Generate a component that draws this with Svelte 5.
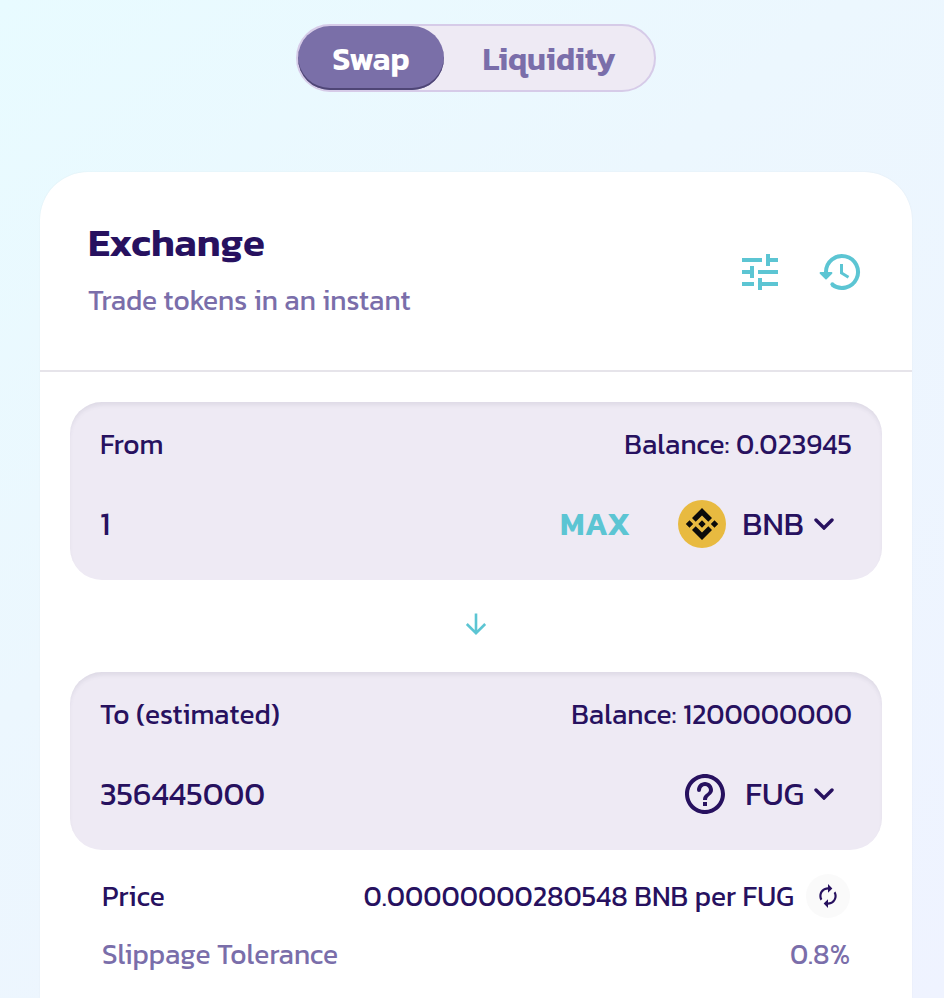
<script>
  let fromAmount = $state('1');
  let toAmount = $state('356445000');
  let view = $state('swap');
</script>

{#snippet chevron()}
  <svg class="chevron" viewBox="0 0 20 12" aria-hidden="true">
    <path d="M2 2l8 8 8-8" fill="none" stroke="currentColor" stroke-width="3.4" stroke-linecap="round" />
  </svg>
{/snippet}

<div class="page">
  <nav class="toggle" aria-label="Exchange views">
    <button class="swap" class:active={view === 'swap'} onclick={() => (view = 'swap')}>Swap</button>
    <button class="liquidity" class:active={view === 'liquidity'} onclick={() => (view = 'liquidity')}>Liquidity</button>
  </nav>

  <main class="card">
    <header>
      <div class="titles">
        <h1>Exchange</h1>
        <p>Trade tokens in an instant</p>
      </div>
      <div class="actions">
        <button class="icon" aria-label="Settings">
          <svg viewBox="0 0 24 24" width="48" height="48" fill="currentColor">
            <path d="M3 17v2h6v-2H3zM3 5v2h10V5H3zm10 16v-2h8v-2h-8v-2h-2v6h2zM7 9v2H3v2h4v2h2V9H7zm14 4v-2H11v2h10zm-6-4h2V7h4V5h-4V3h-2v6z" />
          </svg>
        </button>
        <button class="icon" aria-label="Recent transactions">
          <svg viewBox="0 0 48 48" width="48" height="48" fill="none" stroke="currentColor">
            <path d="M10 26v-2a16 16 0 1 1 6.2 12.6" stroke-width="4" />
            <circle cx="16.4" cy="36.3" r="2" fill="currentColor" stroke="none" />
            <path d="M4.5 25h11L10 30.5z" fill="currentColor" stroke-width="1.8" stroke-linejoin="round" />
            <path d="M25.5 16v9l7 4.2" stroke-width="3" />
          </svg>
        </button>
      </div>
    </header>

    <div class="body">
      <section class="panel">
        <div class="row">
          <label for="from-amount">From</label>
          <span>Balance: 0.023945</span>
        </div>
        <div class="entry">
          <input id="from-amount" inputmode="decimal" bind:value={fromAmount} />
          <button class="max">MAX</button>
          <button class="token">
            <svg viewBox="0 0 48 48" width="48" height="48" aria-hidden="true">
              <circle cx="24" cy="24" r="24" fill="#e8ba40" />
              <path fill="#0b0b0b" d="M24 8l10 10-3.7 3.7-6.3-6.3-6.3 6.3L14 18zM24 40l10-10-3.7-3.7-6.3 6.3-6.3-6.3L14 30zM24 20.3l3.7 3.7-3.7 3.7-3.7-3.7zM11.5 20.3l3.7 3.7-3.7 3.7L7.8 24zM36.5 20.3l3.7 3.7-3.7 3.7-3.7-3.7z" />
            </svg>
            <span>BNB</span>
            {@render chevron()}
          </button>
        </div>
      </section>

      <div class="switch">
        <button class="icon" aria-label="Switch tokens">
          <svg viewBox="0 0 24 24" width="24" height="24" fill="none" stroke="currentColor" stroke-width="2.6">
            <path d="M12 1.5v20M2.8 12l9.2 9.2 9.2-9.2" />
          </svg>
        </button>
      </div>

      <section class="panel">
        <div class="row">
          <label for="to-amount">To (estimated)</label>
          <span>Balance: 1200000000</span>
        </div>
        <div class="entry">
          <input id="to-amount" inputmode="decimal" bind:value={toAmount} />
          <button class="token">
            <svg viewBox="0 0 24 24" width="48" height="48" fill="currentColor" aria-hidden="true">
              <path d="M11 18h2v-2h-2v2zm1-16C6.48 2 2 6.48 2 12s4.48 10 10 10 10-4.48 10-10S17.52 2 12 2zm0 18c-4.41 0-8-3.59-8-8s3.59-8 8-8 8 3.59 8 8-3.59 8-8 8zm0-14c-2.21 0-4 1.79-4 4a1 1 0 0 0 2 0c0-1.1.9-2 2-2s2 .9 2 2c0 2-3 1.75-3 5h2c0-2.25 3-2.5 3-5 0-2.21-1.79-4-4-4z" />
            </svg>
            <span>FUG</span>
            {@render chevron()}
          </button>
        </div>
      </section>

      <div class="details">
        <div class="row">
          <span>Price</span>
          <span class="rate">
            0.00000000280548 BNB per FUG
            <button class="refresh" aria-label="Invert price">
              <svg viewBox="0 0 24 24" width="26" height="26" fill="currentColor">
                <path d="M12 6v3l4-4-4-4v3c-4.42 0-8 3.58-8 8 0 1.57.46 3.03 1.24 4.26L6.7 14.8c-.45-.83-.7-1.79-.7-2.8 0-3.31 2.69-6 6-6zm6.76 1.74L17.3 9.2c.44.84.7 1.79.7 2.8 0 3.31-2.69 6-6 6v-3l-4 4 4 4v-3c4.42 0 8-3.58 8-8 0-1.57-.46-3.03-1.24-4.26z" />
              </svg>
            </button>
          </span>
        </div>
        <div class="row slippage">
          <span>Slippage Tolerance</span>
          <span>0.8%</span>
        </div>
      </div>
    </div>
  </main>
</div>

<style>
  :global(body) {
    margin: 0;
  }

  .page {
    display: flex;
    flex-direction: column;
    align-items: center;
    box-sizing: border-box;
    min-height: 100vh;
    padding: 24px 32px 0 40px;
    background: linear-gradient(140deg, #e8fbff 0%, #ecf7fe 40%, #eff3ff 100%);
    color: #27115f;
    font-family: Kanit, 'Noto Sans', sans-serif;
    font-size: 28px;
    line-height: 40px;
  }

  button,
  input {
    margin: 0;
    padding: 0;
    border: 0;
    background: none;
    color: inherit;
    font: inherit;
  }

  button {
    cursor: pointer;
  }

  svg {
    display: block;
    flex: none;
  }

  .toggle {
    display: flex;
    border: 2px solid #d6cbe8;
    border-radius: 34px;
    background: #eeeaf4;
  }

  .toggle button {
    height: 64px;
    padding-top: 2px;
    border-radius: 32px;
    color: #7a6eaa;
    font-size: 32px;
    font-weight: 600;
  }

  .toggle .swap {
    min-width: 146px;
  }

  .toggle .liquidity {
    min-width: 210px;
  }

  .toggle .active {
    background: #7a6fa8;
    color: #fff;
    box-shadow: inset 0 -2px 0 #4f4676;
  }

  .card {
    flex: 1;
    align-self: stretch;
    margin-top: 80px;
    border-radius: 48px 48px 0 0;
    background: #fff;
    box-shadow: 0 0 2px rgba(25, 19, 38, 0.06);
  }

  header {
    display: flex;
    align-items: center;
    justify-content: space-between;
    padding: 48px 48px 46px;
    border-bottom: 2px solid #e6e4ea;
  }

  h1 {
    margin: 0 0 16px;
    font-size: 40px;
    font-weight: 600;
    line-height: 44px;
  }

  p {
    margin: 0;
    padding-bottom: 4px;
    color: #7a6eaa;
  }

  .actions {
    display: flex;
    gap: 32px;
  }

  .icon {
    color: #5cc5d3;
  }

  .body {
    padding: 30px 30px 0;
  }

  .panel {
    padding: 22px 30px 24px;
    border-radius: 32px;
    background: #eeeaf4;
    box-shadow: inset 0 4px 4px -1px rgba(74, 74, 104, 0.1);
  }

  .row {
    display: flex;
    align-items: center;
    justify-content: space-between;
  }

  .entry {
    display: flex;
    align-items: center;
    height: 64px;
    margin-top: 28px;
    padding-right: 18px;
    font-size: 32px;
  }

  input {
    flex: 1;
    min-width: 0;
    outline: none;
  }

  .max {
    margin-right: 48px;
    color: #5cc5d3;
    font-weight: 600;
  }

  .token {
    display: flex;
    align-items: center;
    gap: 16px;
  }

  .chevron {
    width: 20px;
    height: 12px;
    margin-left: -6px;
  }

  .switch {
    display: flex;
    align-items: center;
    justify-content: center;
    height: 88px;
    padding-bottom: 4px;
  }

  .details {
    display: flex;
    flex-direction: column;
    gap: 16px;
    padding: 24px 32px;
  }

  .rate {
    display: flex;
    align-items: center;
    gap: 12px;
  }

  .refresh {
    display: grid;
    place-items: center;
    width: 44px;
    height: 44px;
    border-radius: 50%;
    background: #fafafa;
  }

  .slippage {
    color: #7a6eaa;
  }
</style>
